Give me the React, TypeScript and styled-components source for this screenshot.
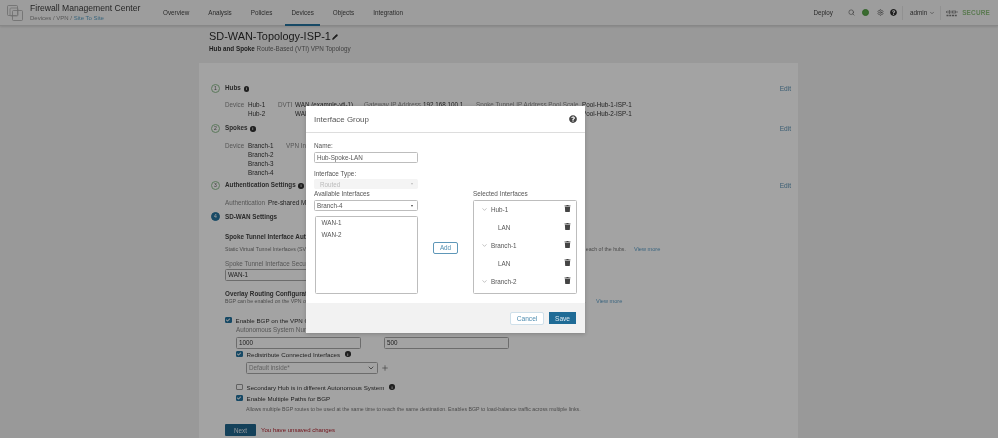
import React from 'react'
import styled, { createGlobalStyle } from 'styled-components'
import { ChevronDown, Pencil, Plus, Search, Settings } from 'lucide-react'
import { FaCheck, FaQuestionCircle, FaTrash } from 'react-icons/fa'

const Global = createGlobalStyle`
  html, body { margin: 0; padding: 0; height: 438px; overflow: hidden; background: #f0f0f0; }
  body { font-family: "Liberation Sans", Arial, sans-serif; color: #333; }
  #root { filter: blur(0.35px); }
`

const Page = styled.div`
  position: relative;
  width: 998px;
  height: 438px;
  overflow: hidden;
  background: #f0f0f0;
`

const Overlay = styled.div`
  position: absolute;
  inset: 0;
  background: rgba(0, 0, 0, 0.36);
`

const Header = styled.header`
  height: 25px;
  display: flex;
  align-items: stretch;
  padding: 0 8px 0 7px;
  background: #f6f6f6;
  border-bottom: 1px solid #d4d4d4;
  box-shadow: 0 1px 2px rgba(0, 0, 0, 0.12);
`

const Brand = styled.div`
  width: 156px;
  display: flex;
  align-items: center;
  gap: 7px;
`

const BrandText = styled.div`
  display: flex;
  flex-direction: column;
  gap: 1px;
`

const BrandTitle = styled.div`
  font-size: 8.6px;
  line-height: 11px;
  color: #3a3a3a;
`

const Crumbs = styled.div`
  font-size: 6px;
  line-height: 7px;
  color: #8a8a8a;
  span { color: #5da0c4; }
`

const Nav = styled.nav`
  display: flex;
  gap: 19px;
`

const NavItem = styled.div<{ $active?: boolean }>`
  position: relative;
  display: flex;
  align-items: center;
  font-size: 6.3px;
  color: #444;
  &::after {
    content: '';
    display: ${({ $active }) => ($active ? 'block' : 'none')};
    position: absolute;
    left: -6px;
    right: -6px;
    bottom: -1px;
    height: 2px;
    background: #24739f;
  }
`

const HeaderRight = styled.div`
  margin-left: auto;
  display: flex;
  align-items: center;
  font-size: 6.3px;
  color: #444;
`

const Deploy = styled.span`
  margin-right: 15px;
`

const IconSlot = styled.span<{ $gap: number }>`
  display: flex;
  align-items: center;
  margin-right: ${({ $gap }) => $gap}px;
  color: #555;
`

const GreenDot = styled.span`
  width: 7px;
  height: 7px;
  border-radius: 50%;
  background: #5ba84b;
  border: 1px solid #4c9a3e;
  box-sizing: border-box;
`

const Admin = styled.span`
  display: flex;
  align-items: center;
  gap: 2px;
  padding: 0 5px 0 7px;
  border-left: 1px solid #e3e3e3;
  border-right: 1px solid #e3e3e3;
  height: 14px;
  margin-right: 5px;
`

const Secure = styled.span`
  margin-left: 4px;
  font-size: 6.4px;
  font-weight: 700;
  letter-spacing: 0.2px;
  color: #8fbf7f;
`

const Main = styled.main`
  width: 599px;
  margin-left: 199px;
`

const TitleBlock = styled.div`
  height: 37px;
  padding: 3px 0 0 10px;
  box-sizing: border-box;
`

const PageTitle = styled.h1`
  margin: 0;
  display: flex;
  align-items: center;
  gap: 1px;
  font-size: 10.9px;
  line-height: 15px;
  font-weight: 400;
  color: #2a2a2a;
`

const SubTitle = styled.div`
  font-size: 6.3px;
  line-height: 9px;
  color: #666;
  b { color: #333; }
`

const Card = styled.section`
  background: #fff;
  padding: 19px 7px 0 12px;
  height: 380px;
  box-sizing: border-box;
`

const StepHead = styled.div<{ $mt?: number }>`
  display: flex;
  align-items: center;
  height: 12px;
  margin-top: ${({ $mt }) => $mt ?? 0}px;
  gap: 5px;
`

const StepNum = styled.span<{ $active?: boolean }>`
  width: 9px;
  height: 9px;
  box-sizing: border-box;
  border-radius: 50%;
  display: flex;
  align-items: center;
  justify-content: center;
  font-size: 5px;
  color: ${({ $active }) => ($active ? '#fff' : '#555')};
  background: ${({ $active }) => ($active ? '#24739f' : '#fff')};
  border: 1px solid ${({ $active }) => ($active ? '#24739f' : '#8fc08f')};
`

const StepTitle = styled.span`
  font-size: 6.3px;
  font-weight: 700;
  color: #444;
`

const Info = styled.span`
  width: 5.5px;
  height: 5.5px;
  border-radius: 50%;
  background: #333;
  color: #fff;
  font-size: 4px;
  font-weight: 700;
  display: inline-flex;
  align-items: center;
  justify-content: center;
  margin-left: 1px;
`

const EditLink = styled.a`
  margin-left: auto;
  font-size: 6.6px;
  color: #5d93b5;
`

const Details = styled.div<{ $mt: number }>`
  display: flex;
  margin: ${({ $mt }) => $mt}px 0 0 14px;
  font-size: 6.3px;
  line-height: 9px;
`

const Col = styled.div<{ $w: number; $muted?: boolean }>`
  width: ${({ $w }) => $w}px;
  flex: none;
  white-space: nowrap;
  color: ${({ $muted }) => ($muted ? '#888' : '#333')};
`

const SettingsBody = styled.div`
  margin-left: 14px;
`

const SubHead = styled.div<{ $mt: number }>`
  margin-top: ${({ $mt }) => $mt}px;
  font-size: 6.3px;
  line-height: 8px;
  font-weight: 700;
  color: #444;
  white-space: nowrap;
`

const Hint = styled.div<{ $mt?: number; $ml?: number }>`
  display: flex;
  margin-top: ${({ $mt }) => $mt ?? 0}px;
  margin-left: ${({ $ml }) => $ml ?? 0}px;
  font-size: 5.24px;
  line-height: 7px;
  color: #777;
  white-space: nowrap;
`

const HintText = styled.span<{ $w: number }>`
  width: ${({ $w }) => $w}px;
  flex: none;
`

const HintLink = styled.a`
  font-size: 5.6px;
  color: #5d9fc8;
`

const FieldLabel = styled.div<{ $mt?: number; $ml?: number }>`
  margin-top: ${({ $mt }) => $mt ?? 0}px;
  margin-left: ${({ $ml }) => $ml ?? 0}px;
  font-size: 6.3px;
  line-height: 8px;
  color: #888;
  white-space: nowrap;
`

const TextField = styled.div<{ $w: number; $muted?: boolean; $mt?: number }>`
  width: ${({ $w }) => $w}px;
  height: 12px;
  margin-top: ${({ $mt }) => $mt ?? 0}px;
  box-sizing: border-box;
  padding: 0 2px;
  border: 1px solid #aaa;
  border-radius: 1.5px;
  font-size: 6.3px;
  line-height: 10px;
  background: #fff;
  color: ${({ $muted }) => ($muted ? '#999' : '#333')};
  display: flex;
  align-items: center;
  justify-content: space-between;
`

const CheckRow = styled.div<{ $mt: number; $ml?: number }>`
  display: flex;
  align-items: center;
  gap: 4px;
  height: 8px;
  margin-top: ${({ $mt }) => $mt}px;
  margin-left: ${({ $ml }) => $ml ?? 0}px;
  font-size: 6.2px;
  color: #333;
  white-space: nowrap;
`

const CheckBox = styled.span<{ $on?: boolean }>`
  width: 6.5px;
  height: 6.5px;
  flex: none;
  box-sizing: border-box;
  border-radius: 1px;
  display: flex;
  align-items: center;
  justify-content: center;
  color: #fff;
  background: ${({ $on }) => ($on ? '#24739f' : '#fff')};
  border: 1px solid ${({ $on }) => ($on ? '#24739f' : '#999')};
`

const AsnRow = styled.div`
  display: flex;
  gap: 23px;
  margin: 3px 0 0 11px;
`

const RedistRow = styled.div`
  display: flex;
  align-items: center;
  gap: 3px;
  margin: 4px 0 0 21px;
  color: #666;
`

const NextRow = styled.div`
  display: flex;
  align-items: center;
  gap: 5px;
  margin-top: 11px;
`

const NextButton = styled.button`
  width: 31px;
  height: 12px;
  padding: 0;
  border: none;
  border-radius: 1px;
  background: #20668e;
  color: #dfe9ef;
  font: 6.3px "Liberation Sans", Arial, sans-serif;
`

const Unsaved = styled.span`
  font-size: 6.05px;
  color: #b3202c;
`

const Modal = styled.div`
  position: absolute;
  left: 306px;
  top: 106px;
  width: 279px;
  height: 227px;
  background: #fff;
  display: flex;
  flex-direction: column;
  box-shadow: 0 1px 4px rgba(0, 0, 0, 0.2);
`

const ModalHead = styled.div`
  height: 27px;
  flex: none;
  box-sizing: border-box;
  padding: 0 8px;
  display: flex;
  align-items: center;
  justify-content: space-between;
  border-bottom: 1px solid #ddd;
  font-size: 7.9px;
  color: #555;
`

const ModalBody = styled.div`
  flex: 1;
  padding: 9px 8px 0;
  display: flex;
  flex-direction: column;
`

const ModalLabel = styled.div<{ $mt?: number }>`
  font-size: 6.4px;
  line-height: 8px;
  color: #555;
  margin-top: ${({ $mt }) => $mt ?? 0}px;
`

const ModalInput = styled.div<{ $disabled?: boolean; $h?: number }>`
  width: 104px;
  height: ${({ $h }) => $h ?? 11}px;
  box-sizing: border-box;
  margin-top: ${({ $disabled }) => ($disabled ? 1 : 2)}px;
  padding: 0 4px 0 ${({ $disabled }) => ($disabled ? 5 : 2)}px;
  display: flex;
  align-items: center;
  justify-content: space-between;
  border-radius: 1.5px;
  border: 1px solid ${({ $disabled }) => ($disabled ? '#f4f4f4' : '#bdbdbd')};
  background: ${({ $disabled }) => ($disabled ? '#f4f4f4' : '#fff')};
  color: ${({ $disabled }) => ($disabled ? '#bbb' : '#555')};
  font-size: 6.3px;
`

const Caret = styled.span<{ $light?: boolean }>`
  width: 0;
  height: 0;
  border-left: 1.5px solid transparent;
  border-right: 1.5px solid transparent;
  border-top: 2.5px solid ${({ $light }) => ($light ? '#bbb' : '#444')};
`

const Columns = styled.div`
  display: grid;
  grid-template-columns: 105px 54px 104px;
  margin-top: 1px;
`

const ListBox = styled.div`
  width: 103.5px;
  height: 78px;
  box-sizing: border-box;
  margin-top: 5px;
  margin-left: 0.5px;
  padding: 0 6px;
  border: 1px solid #bdbdbd;
  border-radius: 1.5px;
  font-size: 6.3px;
  color: #555;
`

const ListItem = styled.div`
  height: 12px;
  line-height: 11px;
`

const AddCell = styled.div`
  display: flex;
  align-items: center;
  justify-content: center;
  padding: 11px 1px 0 0;
`

const AddButton = styled.button`
  width: 25px;
  height: 12px;
  padding: 0;
  background: #fff;
  border: 1px solid #5e97b8;
  border-radius: 2px;
  color: #4f8db0;
  font: 6.3px "Liberation Sans", Arial, sans-serif;
`

const TreeBox = styled.div`
  height: 94px;
  box-sizing: border-box;
  margin-top: 2px;
  border: 1px solid #bdbdbd;
  border-radius: 1.5px;
`

const TreeRow = styled.div<{ $child?: boolean }>`
  height: 18px;
  display: flex;
  align-items: center;
  position: relative;
  top: -1px;
  padding: 0 5px 0 ${({ $child }) => ($child ? 24 : 7)}px;
  gap: 3px;
  font-size: 6.3px;
  color: #555;
  svg:last-child { margin-left: auto; color: #444; margin-top: -2px; }
`

const ModalFoot = styled.div`
  height: 30px;
  flex: none;
  box-sizing: border-box;
  padding: 0 9px 0 0;
  display: flex;
  align-items: center;
  justify-content: flex-end;
  gap: 5px;
  background: #f2f2f2;
`

const CancelButton = styled.button`
  width: 34px;
  height: 13px;
  padding: 0;
  background: #fff;
  border: 1px solid #cfe0ea;
  border-radius: 2px;
  color: #4f8db0;
  font: 6.6px "Liberation Sans", Arial, sans-serif;
`

const SaveButton = styled.button`
  width: 27px;
  height: 12px;
  padding: 0;
  background: #1f6b96;
  border: none;
  color: #dce9f0;
  font: 6.6px "Liberation Sans", Arial, sans-serif;
`

const WindowsLogo = () => (
  <svg width="16" height="16" viewBox="0 0 16 16" fill="none" stroke="#a9a9a9" strokeWidth="0.8">
    <rect x="0.5" y="0.5" width="10" height="10" rx="1" />
    <rect x="3" y="3" width="8" height="8" rx="1" stroke="#b5b5b5" />
    <rect x="5.5" y="5.5" width="10" height="10" rx="1" />
  </svg>
)

const CiscoBars = () => (
  <svg width="12" height="8" viewBox="0 0 24 16" stroke="#777" strokeWidth="1.6" strokeLinecap="round">
    {[1, 4, 7, 10, 13, 16, 19, 22].map((x, i) => {
      const h = [2, 4, 6, 4, 4, 6, 4, 2][i]
      return <line key={x} x1={x} x2={x} y1={6 - h / 2} y2={6 + h / 2} />
    })}
    <line x1="1" x2="23" y1="13" y2="13" strokeWidth="3" strokeDasharray="4 1.5" strokeLinecap="butt" />
  </svg>
)

const TreeItem = ({ label, child }: { label: string; child?: boolean }) => (
  <TreeRow $child={child}>
    {!child && <ChevronDown size={7} strokeWidth={1.5} color="#777" />}
    <span>{label}</span>
    <FaTrash size={7} />
  </TreeRow>
)

export default function App() {
  return (
    <Page>
      <Global />
      <Header>
        <Brand>
          <WindowsLogo />
          <BrandText>
            <BrandTitle>Firewall Management Center</BrandTitle>
            <Crumbs>
              Devices / VPN / <span>Site To Site</span>
            </Crumbs>
          </BrandText>
        </Brand>
        <Nav>
          <NavItem>Overview</NavItem>
          <NavItem>Analysis</NavItem>
          <NavItem>Policies</NavItem>
          <NavItem $active>Devices</NavItem>
          <NavItem>Objects</NavItem>
          <NavItem>Integration</NavItem>
        </Nav>
        <HeaderRight>
          <Deploy>Deploy</Deploy>
          <IconSlot $gap={7}>
            <Search size={7} />
          </IconSlot>
          <IconSlot $gap={8}>
            <GreenDot />
          </IconSlot>
          <IconSlot $gap={6}>
            <Settings size={7} />
          </IconSlot>
          <IconSlot $gap={5}>
            <FaQuestionCircle size={7} color="#333" />
          </IconSlot>
          <Admin>
            admin <ChevronDown size={6} />
          </Admin>
          <CiscoBars />
          <Secure>SECURE</Secure>
        </HeaderRight>
      </Header>
      <Main>
        <TitleBlock>
          <PageTitle>
            SD-WAN-Topology-ISP-1 <Pencil size={6} fill="#333" />
          </PageTitle>
          <SubTitle>
            <b>Hub and Spoke</b> Route-Based (VTI) VPN Topology
          </SubTitle>
        </TitleBlock>
        <Card>
          <StepHead>
            <StepNum>1</StepNum>
            <StepTitle>
              Hubs <Info>i</Info>
            </StepTitle>
            <EditLink>Edit</EditLink>
          </StepHead>
          <Details $mt={6}>
            <Col $w={23} $muted>Device</Col>
            <Col $w={30}>Hub-1<br />Hub-2</Col>
            <Col $w={17} $muted>DVTI</Col>
            <Col $w={69}>WAN (example-vti-1)<br />WAN (example-vti-2)</Col>
            <Col $w={59} $muted>Gateway IP Address</Col>
            <Col $w={53}>192.168.100.1</Col>
            <Col $w={106} $muted>Spoke Tunnel IP Address Pool Scale</Col>
            <Col $w={60}>Pool-Hub-1-ISP-1<br />Pool-Hub-2-ISP-1</Col>
          </Details>
          <StepHead $mt={4}>
            <StepNum>2</StepNum>
            <StepTitle>
              Spokes <Info>i</Info>
            </StepTitle>
            <EditLink>Edit</EditLink>
          </StepHead>
          <Details $mt={7}>
            <Col $w={23} $muted>Device</Col>
            <Col $w={38}>Branch-1<br />Branch-2<br />Branch-3<br />Branch-4</Col>
            <Col $w={40} $muted>VPN Interface</Col>
          </Details>
          <StepHead $mt={2}>
            <StepNum>3</StepNum>
            <StepTitle>
              Authentication Settings <Info>i</Info>
            </StepTitle>
            <EditLink>Edit</EditLink>
          </StepHead>
          <Details $mt={7}>
            <Col $w={43} $muted>Authentication</Col>
            <Col $w={80}>Pre-shared Manual Key</Col>
          </Details>
          <StepHead $mt={3}>
            <StepNum $active>4</StepNum>
            <StepTitle>SD-WAN Settings</StepTitle>
          </StepHead>
          <SettingsBody>
            <SubHead $mt={11}>Spoke Tunnel Interface Auto Creation</SubHead>
            <Hint $mt={5}>
              <HintText $w={409}>
                Static Virtual Tunnel Interfaces (SVTI) will be created automatically on the spokes for every selected WAN interface, each one mapped to a single tunnel on each of the hubs.
              </HintText>
              <HintLink>View more</HintLink>
            </Hint>
            <FieldLabel $mt={7}>Spoke Tunnel Interface Security Zone</FieldLabel>
            <TextField $w={140} $mt={1}>WAN-1</TextField>
            <SubHead $mt={9}>Overlay Routing Configuration</SubHead>
            <Hint>
              <HintText $w={371}>
                BGP can be enabled on the VPN overlay network to dynamically exchange routes between the spokes and the hubs over the tunnels created with their hub.
              </HintText>
              <HintLink>View more</HintLink>
            </Hint>
            <CheckRow $mt={11}>
              <CheckBox $on><FaCheck size={4} /></CheckBox>
              Enable BGP on the VPN Overlay Topology
            </CheckRow>
            <FieldLabel $mt={2} $ml={11}>Autonomous System Number</FieldLabel>
            <AsnRow>
              <TextField $w={125}>1000</TextField>
              <TextField $w={125}>500</TextField>
            </AsnRow>
            <CheckRow $mt={1} $ml={11}>
              <CheckBox $on><FaCheck size={4} /></CheckBox>
              Redistribute Connected Interfaces <Info>i</Info>
            </CheckRow>
            <RedistRow>
              <TextField $w={132} $muted>
                Default inside*
                <ChevronDown size={8} color="#333" />
              </TextField>
              <Plus size={8} />
            </RedistRow>
            <CheckRow $mt={9} $ml={11}>
              <CheckBox />
              Secondary Hub is in different Autonomous System <Info>i</Info>
            </CheckRow>
            <CheckRow $mt={3} $ml={11}>
              <CheckBox $on><FaCheck size={4} /></CheckBox>
              Enable Multiple Paths for BGP
            </CheckRow>
            <Hint $mt={4} $ml={21}>
              Allows multiple BGP routes to be used at the same time to reach the same destination. Enables BGP to load-balance traffic across multiple links.
            </Hint>
            <NextRow>
              <NextButton>Next</NextButton>
              <Unsaved>You have unsaved changes</Unsaved>
            </NextRow>
          </SettingsBody>
        </Card>
      </Main>
      <Overlay />
      <Modal>
        <ModalHead>
          Interface Group
          <FaQuestionCircle size={8} color="#444" />
        </ModalHead>
        <ModalBody>
          <ModalLabel>Name:</ModalLabel>
          <ModalInput>Hub-Spoke-LAN</ModalInput>
          <ModalLabel $mt={7}>Interface Type:</ModalLabel>
          <ModalInput $disabled $h={10}>
            Routed <Caret $light />
          </ModalInput>
          <Columns>
            <div>
              <ModalLabel>Available Interfaces</ModalLabel>
              <ModalInput>
                Branch-4 <Caret />
              </ModalInput>
              <ListBox>
                <ListItem>WAN-1</ListItem>
                <ListItem>WAN-2</ListItem>
              </ListBox>
            </div>
            <AddCell>
              <AddButton>Add</AddButton>
            </AddCell>
            <div>
              <ModalLabel>Selected Interfaces</ModalLabel>
              <TreeBox>
                <TreeItem label="Hub-1" />
                <TreeItem label="LAN" child />
                <TreeItem label="Branch-1" />
                <TreeItem label="LAN" child />
                <TreeItem label="Branch-2" />
              </TreeBox>
            </div>
          </Columns>
        </ModalBody>
        <ModalFoot>
          <CancelButton>Cancel</CancelButton>
          <SaveButton>Save</SaveButton>
        </ModalFoot>
      </Modal>
    </Page>
  )
}
